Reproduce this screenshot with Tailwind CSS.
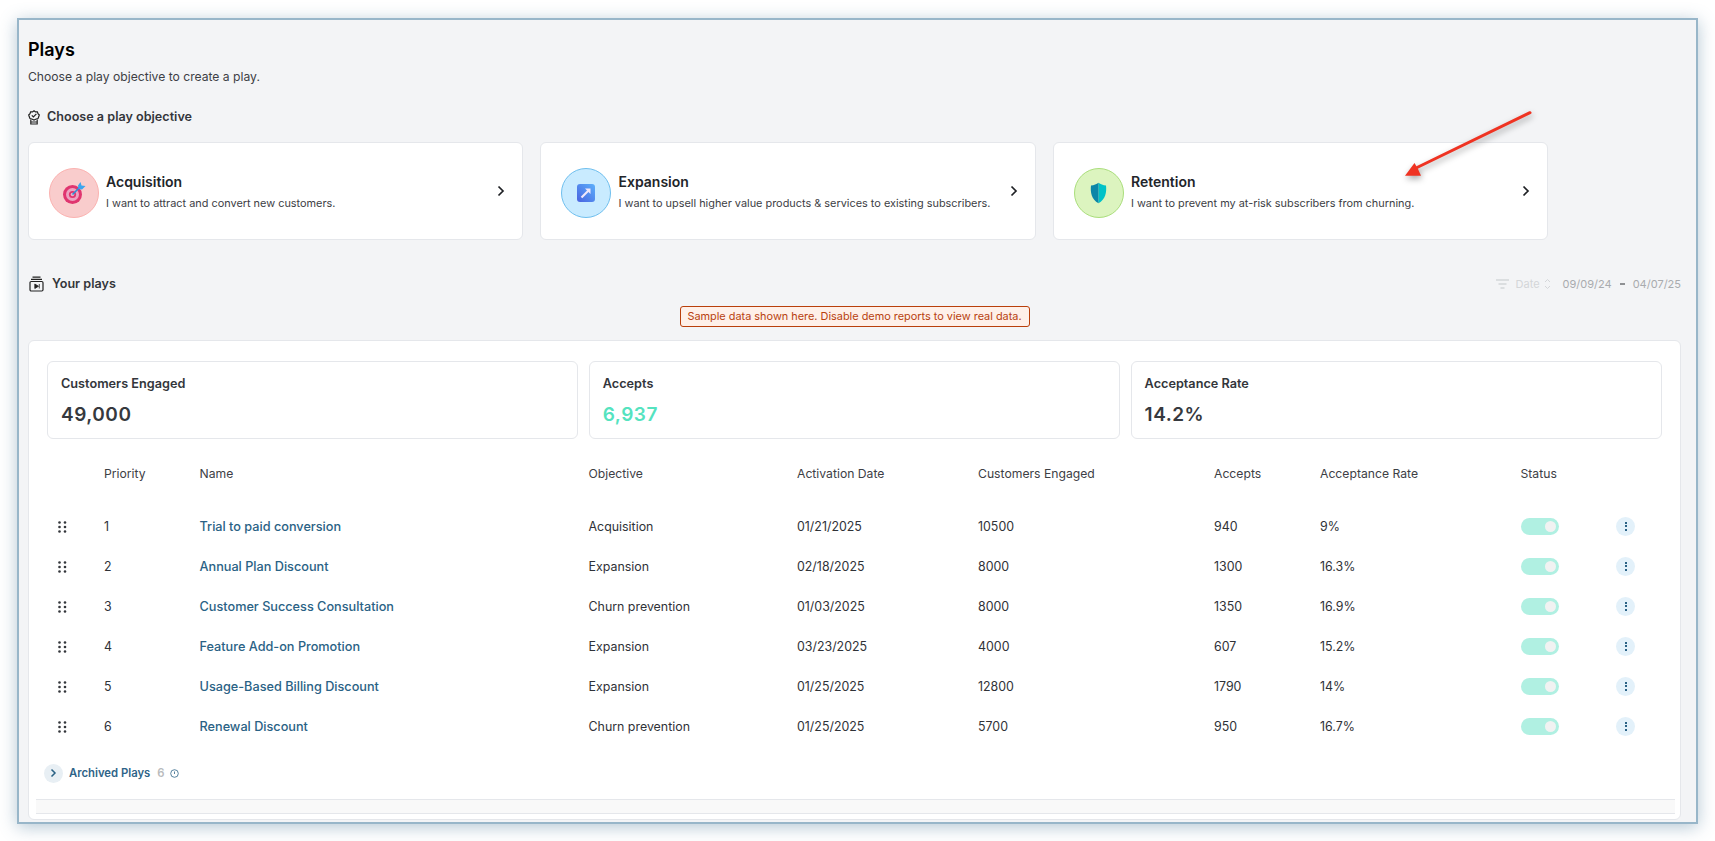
<!DOCTYPE html>
<html lang="en">
<head>
  <meta charset="UTF-8">
  <title>Plays</title>
  <script src="https://cdn.jsdelivr.net/npm/@tailwindcss/browser@4"></script>
</head>
<body class="bg-white h-[841px] overflow-hidden font-['Inter',sans-serif] text-[#2f3237]">
  <div class="relative ml-[17px] mt-[18px] w-[1681px] h-[806px] border-2 border-[#98b6c9] bg-[#f3f4f6] shadow-[0_3px_16px_rgba(88,130,160,0.45)] pl-[9px] pr-[15px] pt-[18px]">

    <h1 class="text-[18px] leading-[24px] font-semibold text-black">Plays</h1>
    <p class="mt-[5px] text-[12.15px] leading-[20px] text-[#3d4045]">Choose a play objective to create a play.</p>

    <!-- Objective -->
    <div class="mt-[20px] flex items-center gap-[7px] h-[20px]">
      <svg width="12" height="15" viewBox="0 0 12 15" fill="none" stroke="#222" stroke-width="1.2">
        <path d="M6 .8 7.5 1.9 9.4 1.9 10 3.7 11.3 5 10.7 6.7 10 8.6 8.2 9 6 10 3.8 9 2 8.6 1.3 6.7.7 5 2 3.7 2.6 1.9 4.5 1.9Z"/>
        <path d="M3.8 5.4 5.4 7 8.4 3.9"/>
        <path d="M2.8 9.5V14H9.2V9.5M2.8 12H9.2"/>
      </svg>
      <span class="text-[12.6px] font-semibold text-[#33363b]">Choose a play objective</span>
    </div>

    <!-- Objective cards -->
    <div class="mt-[15px] flex gap-[17.2px]">
      <div class="w-[495.3px] h-[98px] bg-white border border-[#e5e7eb] rounded-[6px] flex items-center pl-[20px] pr-[17px]">
        <div class="mt-[4px] w-[50px] h-[50px] rounded-full bg-[#f9cccc] border border-[#fbb2b0] flex items-center justify-center shrink-0">
          <svg width="24" height="24" viewBox="0 0 24 24">
            <circle cx="10.5" cy="13.5" r="9.5" fill="#e0356f"/>
            <circle cx="10.5" cy="13.5" r="6.5" fill="#eda2c0"/>
            <circle cx="10.5" cy="13.5" r="3.6" fill="#e0356f"/>
            <circle cx="10.5" cy="13.5" r="1.8" fill="#e8b8ca"/>
            <path d="M10.5 13.5 18 6" stroke="#2d8fd5" stroke-width="1.6"/>
            <path d="M16 4.500 18.500 1 19.500 4.500 23.500 5 20 8.500 16.500 8Z" fill="#3ba5ef"/>
          </svg>
        </div>
        <div class="ml-[7px] flex-1">
          <div class="text-[14px] leading-[20px] font-semibold text-[#22252a]">Acquisition</div>
          <div class="mt-[3px] text-[10.9px] leading-[16px] text-[#3d4045]">I want to attract and convert new customers.</div>
        </div>
        <svg width="8" height="12" viewBox="0 0 8 12" fill="none" stroke="#1e2024" stroke-width="1.7"><path d="M1.500 1.500 6 6 1.500 10.500"/></svg>
      </div>

      <div class="w-[495.3px] h-[98px] bg-white border border-[#e5e7eb] rounded-[6px] flex items-center pl-[20px] pr-[17px]">
        <div class="mt-[4px] w-[50px] h-[50px] rounded-full bg-[#c9ebff] border border-[#6fbfee] flex items-center justify-center shrink-0">
          <svg width="20" height="20" viewBox="0 0 20 20">
            <defs><linearGradient id="blueBox" x1="1" y1="0" x2="0" y2="1"><stop offset="0" stop-color="#5cb0fb"/><stop offset="1" stop-color="#4a62e0"/></linearGradient></defs>
            <rect x="1" y="1" width="18" height="18" rx="3" fill="url(#blueBox)"/>
            <path d="M5.500 14.500 13 7" stroke="#f2e8fb" stroke-width="2.200"/>
            <path d="M9 5.500H14.500V11Z" fill="#f2e8fb"/>
          </svg>
        </div>
        <div class="ml-[7px] flex-1">
          <div class="text-[14px] leading-[20px] font-semibold text-[#22252a]">Expansion</div>
          <div class="mt-[3px] text-[10.9px] leading-[16px] text-[#3d4045]">I want to upsell higher value products &amp; services to existing subscribers.</div>
        </div>
        <svg width="8" height="12" viewBox="0 0 8 12" fill="none" stroke="#1e2024" stroke-width="1.7"><path d="M1.500 1.500 6 6 1.500 10.500"/></svg>
      </div>

      <div class="w-[495.3px] h-[98px] bg-white border border-[#e5e7eb] rounded-[6px] flex items-center pl-[20px] pr-[17px]">
        <div class="mt-[4px] w-[50px] h-[50px] rounded-full bg-[#dcf4bf] border border-[#aade7c] flex items-center justify-center shrink-0">
          <svg width="17" height="22" viewBox="0 0 17 22">
            <path d="M8.500 .8C10.500 2.400 13 3.200 16 3.500C16.800 10 15.500 17.500 8.500 21.200Z" fill="#00c2c7"/>
            <path d="M8.500 .8C6.500 2.400 4 3.200 1 3.500C.2 10 1.500 17.500 8.500 21.200Z" fill="#0b86a8"/>
          </svg>
        </div>
        <div class="ml-[7px] flex-1">
          <div class="text-[14px] leading-[20px] font-semibold text-[#22252a]">Retention</div>
          <div class="mt-[3px] text-[10.9px] leading-[16px] text-[#3d4045]">I want to prevent my at-risk subscribers from churning.</div>
        </div>
        <svg width="8" height="12" viewBox="0 0 8 12" fill="none" stroke="#1e2024" stroke-width="1.7"><path d="M1.500 1.500 6 6 1.500 10.500"/></svg>
      </div>
    </div>

    <!-- Your plays -->
    <div class="mt-[33px] h-[22px] flex items-center justify-between">
      <div class="flex items-center gap-[8px] pl-[1px]">
        <svg width="15" height="16" viewBox="0 0 15 16" fill="none" stroke="#222" stroke-width="1.200">
          <rect x="1" y="5.500" width="13" height="9.500" rx="1.200"/>
          <path d="M2 3.300H13M3.500 1.200H11.500"/>
          <path d="M5.800 8V12.500L9.500 10.250Z" fill="#222" stroke-width="0.800"/>
          <path d="M10.300 8V12.500" stroke-width="0.800"/>
        </svg>
        <span class="text-[12.6px] font-semibold text-[#33363b]">Your plays</span>
      </div>
      <div class="flex items-center text-[11px] text-[#a9abae]">
        <svg width="15" height="10" viewBox="0 0 15 10" stroke="#d4d6d9" stroke-width="1.600"><path d="M1 1H14M3.500 5H11.500M5.500 9H9.500"/></svg>
        <span class="ml-[6px] text-[#d4d6d9]">Date</span>
        <svg class="ml-[4px]" width="7" height="12" viewBox="0 0 7 12" fill="none" stroke="#d4d6d9"><path d="M1 4 3.500 1.500 6 4M1 8 3.500 10.500 6 8"/></svg>
        <span class="ml-[12px]">09/09/24</span>
        <span class="mx-[8px] w-[5px] h-[2px] bg-[#8f9194]"></span>
        <span>04/07/25</span>
      </div>
    </div>

    <!-- Demo notice -->
    <div class="mt-[11px] flex justify-center">
      <div class="w-[350px] h-[21px] bg-[#fef0e9] border border-[#b93f0b] rounded-[3px] text-[10.9px] leading-[19px] text-center text-[#b8410f]">Sample data shown here. Disable demo reports to view real data.</div>
    </div>

    <!-- Panel -->
    <div class="mt-[13px] h-[480px] w-[1653px] bg-white border border-[#e5e7eb] rounded-[6px] pt-[20px] pl-[18px] pr-[18px]">
      <div class="flex gap-[10.4px]">
        <div class="w-[532px] h-[78px] border border-[#e5e7eb] rounded-[6px] pl-[13px] pt-[13px]">
          <div class="text-[12.7px] leading-[18px] font-semibold text-[#33363b]">Customers Engaged</div>
          <div class="mt-[9px] text-[19px] leading-[26px] font-semibold tracking-[0.5px] text-[#36393e]">49,000</div>
        </div>
        <div class="w-[532px] h-[78px] border border-[#e5e7eb] rounded-[6px] pl-[13px] pt-[13px]">
          <div class="text-[12.7px] leading-[18px] font-semibold text-[#33363b]">Accepts</div>
          <div class="mt-[9px] text-[19px] leading-[26px] font-semibold tracking-[0.5px] text-[#55e3bf]">6,937</div>
        </div>
        <div class="w-[532px] h-[78px] border border-[#e5e7eb] rounded-[6px] pl-[13px] pt-[13px]">
          <div class="text-[12.7px] leading-[18px] font-semibold text-[#33363b]">Acceptance Rate</div>
          <div class="mt-[9px] text-[19px] leading-[26px] font-semibold tracking-[0.5px] text-[#36393e]">14.2%</div>
        </div>
      </div>

      <div id="table" class="mt-[20px]">
        <div class="grid grid-cols-[57px_95.500px_389px_208.500px_181px_236px_106px_200.500px_95.500px_19px] h-[30px] items-center text-[12.2px] text-[#3d4045]">
          <span></span><span>Priority</span><span>Name</span><span>Objective</span><span>Activation Date</span><span>Customers Engaged</span><span>Accepts</span><span>Acceptance Rate</span><span>Status</span><span></span>
        </div>
        <div id="rows" class="mt-[18px] text-[12.4px]"></div>
      </div>

      <div class="mt-[16px] ml-[-3px] flex items-center h-[20px]">
        <div class="w-[19px] h-[19px] rounded-full bg-[#e8eff4] flex items-center justify-center">
          <svg width="7" height="10" viewBox="0 0 7 10" fill="none" stroke="#2a6285" stroke-width="1.500"><path d="M1.500 1.500 5 5 1.500 8.500"/></svg>
        </div>
        <span class="ml-[6px] text-[11.3px] font-semibold text-[#2f6488]">Archived Plays</span>
        <span class="ml-[7px] text-[11.3px] font-semibold text-[#b9bbbd]">6</span>
        <svg class="ml-[5px]" width="9" height="9" viewBox="0 0 9 9" fill="none" stroke="#2f6488" stroke-width="0.800"><circle cx="4.500" cy="4.500" r="3.800"/><path d="M4.500 2.500V5"/></svg>
      </div>

      <div class="mt-[16px] ml-[-11px] w-[1639px] h-[15px] bg-[#f9f9f9] border-y border-[#e5e7eb]"></div>
    </div>

    <!-- Annotation arrow -->
    <svg class="absolute left-[1375px] top-[85px] overflow-visible drop-shadow-[1px_3px_3px_rgba(0,0,0,0.35)]" width="160" height="80" viewBox="0 0 160 80" fill="none">
      <path d="M136 7.700 20 64" stroke="#ef3322" stroke-width="3" stroke-linecap="round"/>
      <path d="M11 70.700 20.500 58 24 64 27 70.700Z" fill="#ef3322"/>
    </svg>
  </div>

  <script>
    const plays = [
      [1, "Trial to paid conversion", "Acquisition", "01/21/2025", 10500, 940, "9%"],
      [2, "Annual Plan Discount", "Expansion", "02/18/2025", 8000, 1300, "16.3%"],
      [3, "Customer Success Consultation", "Churn prevention", "01/03/2025", 8000, 1350, "16.9%"],
      [4, "Feature Add-on Promotion", "Expansion", "03/23/2025", 4000, 607, "15.2%"],
      [5, "Usage-Based Billing Discount", "Expansion", "01/25/2025", 12800, 1790, "14%"],
      [6, "Renewal Discount", "Churn prevention", "01/25/2025", 5700, 950, "16.7%"],
    ];

    document.getElementById("rows").innerHTML = plays.map(p => `
      <div class="grid grid-cols-[57px_95.500px_389px_208.500px_181px_236px_106px_200.500px_95.500px_19px] h-[40px] items-center text-[#2f3237]">
        <svg class="ml-[11px]" width="9" height="12" viewBox="0 0 9 12" fill="#33363b"><circle cx="1.500" cy="1.500" r="1.300"/><circle cx="7" cy="1.500" r="1.300"/><circle cx="1.500" cy="6" r="1.300"/><circle cx="7" cy="6" r="1.300"/><circle cx="1.500" cy="10.500" r="1.300"/><circle cx="7" cy="10.500" r="1.300"/></svg>
        <span>${p[0]}</span>
        <span class="text-[12.7px] font-medium text-[#2a6285]">${p[1]}</span>
        <span>${p[2]}</span>
        <span>${p[3]}</span>
        <span>${p[4]}</span>
        <span>${p[5]}</span>
        <span>${p[6]}</span>
        <div class="mb-[2px] w-[38px] h-[17px] rounded-full bg-[#b0f0e2] flex items-center justify-end pr-[3px]"><div class="w-[11px] h-[11px] rounded-full bg-[#f1f2f2]"></div></div>
        <div class="mb-[2px] w-[19px] h-[19px] rounded-full bg-[#e3f1fa] flex flex-col items-center justify-center gap-[1.500px]"><i class="block w-[2px] h-[2px] bg-[#2a6285]"></i><i class="block w-[2px] h-[2px] bg-[#2a6285]"></i><i class="block w-[2px] h-[2px] bg-[#2a6285]"></i></div>
      </div>`).join("");
  </script>
</body>
</html>
